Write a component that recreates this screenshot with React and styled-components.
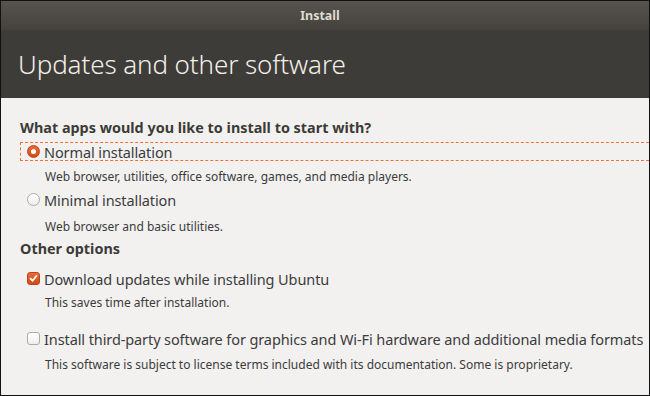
import styled, { createGlobalStyle } from "styled-components";

const Global = createGlobalStyle`
  html, body {
    margin: 0;
    padding: 0;
    background: #000;
  }
  * {
    box-sizing: border-box;
  }
`;

const Window = styled.div`
  width: 650px;
  height: 396px;
  border: 1px solid #111;
  display: flex;
  flex-direction: column;
  background: #f2f1f0;
  overflow: hidden;
  font-family: "Noto Sans", "Open Sans", sans-serif;
`;

const TitleBar = styled.div`
  height: 29px;
  flex-shrink: 0;
  display: flex;
  align-items: center;
  justify-content: center;
  background: linear-gradient(#57534e, #45423d);
  color: #dfdbd2;
  font-size: 12.5px;
  font-weight: 700;
  padding-right: 10px;
`;

const Header = styled.div`
  height: 68px;
  flex-shrink: 0;
  display: flex;
  align-items: center;
  padding-left: 17px;
  background: #3e3c38;
  color: #f2efe9;
  font-size: 26px;
  font-weight: 300;
  letter-spacing: -0.1px;
`;

const Content = styled.div`
  display: flex;
  flex-direction: column;
  padding: 20px 0 0 19px;
  color: #3c3c3c;
`;

const Heading = styled.div`
  font-size: 14.4px;
  font-weight: 700;
  line-height: 20px;
  color: #3c3b37;
  margin-top: ${(p) => p.$top || 0}px;
`;

const Option = styled.label`
  display: flex;
  align-items: center;
  gap: 4px;
  height: 19px;
  padding-left: 6px;
  margin-top: ${(p) => p.$top || 0}px;
  font-size: 14.5px;
  letter-spacing: -0.1px;
  color: #3c3c3c;
  border: 1px dashed ${(p) => (p.$focus ? "#f0703c" : "transparent")};
  border-right: none;
  white-space: nowrap;
`;

const Desc = styled.div`
  font-size: 12px;
  line-height: 18px;
  padding-left: 25px;
  margin-top: ${(p) => p.$top || 0}px;
  color: #3c3c3c;
  white-space: nowrap;
`;

const Mark = styled.span`
  width: 13px;
  height: 13px;
  flex-shrink: 0;
  display: flex;
  align-items: center;
  justify-content: center;
  border-radius: ${(p) => (p.$round ? "50%" : "3px")};
  border: 1px solid ${(p) => (p.$on ? "#b8481b" : "#aeaba7")};
  background: ${(p) =>
    p.$on ? "linear-gradient(#ec6a36, #d04c17)" : "linear-gradient(#ffffff, #efeeec)"};
`;

const Dot = styled.span`
  width: 5px;
  height: 5px;
  border-radius: 50%;
  background: #fff;
`;

function Radio({ on }) {
  return <Mark $round $on={on}>{on && <Dot />}</Mark>;
}

function Check({ on }) {
  return (
    <Mark $on={on}>
      {on && (
        <svg width="9" height="9" viewBox="0 0 9 9">
          <path d="M1.5 4.6 L3.6 6.8 L7.6 1.8" fill="none" stroke="#fff" strokeWidth="1.7" strokeLinecap="round" strokeLinejoin="round" />
        </svg>
      )}
    </Mark>
  );
}

export default function App() {
  return (
    <Window>
      <Global />
      <TitleBar>Install</TitleBar>
      <Header>Updates and other software</Header>
      <Content>
        <Heading>What apps would you like to install to start with?</Heading>
        <Option $focus $top={4}>
          <Radio on />
          Normal installation
        </Option>
        <Desc $top={7}>Web browser, utilities, office software, games, and media players.</Desc>
        <Option $top={4}>
          <Radio />
          Minimal installation
        </Option>
        <Desc $top={9}>Web browser and basic utilities.</Desc>
        <Heading $top={3}>Other options</Heading>
        <Option $top={10}>
          <Check on />
          Download updates while installing Ubuntu
        </Option>
        <Desc $top={6}>This saves time after installation.</Desc>
        <Option $top={17}>
          <Check />
          Install third-party software for graphics and Wi-Fi hardware and additional media formats
        </Option>
        <Desc $top={8}>This software is subject to license terms included with its documentation. Some is proprietary.</Desc>
      </Content>
    </Window>
  );
}
